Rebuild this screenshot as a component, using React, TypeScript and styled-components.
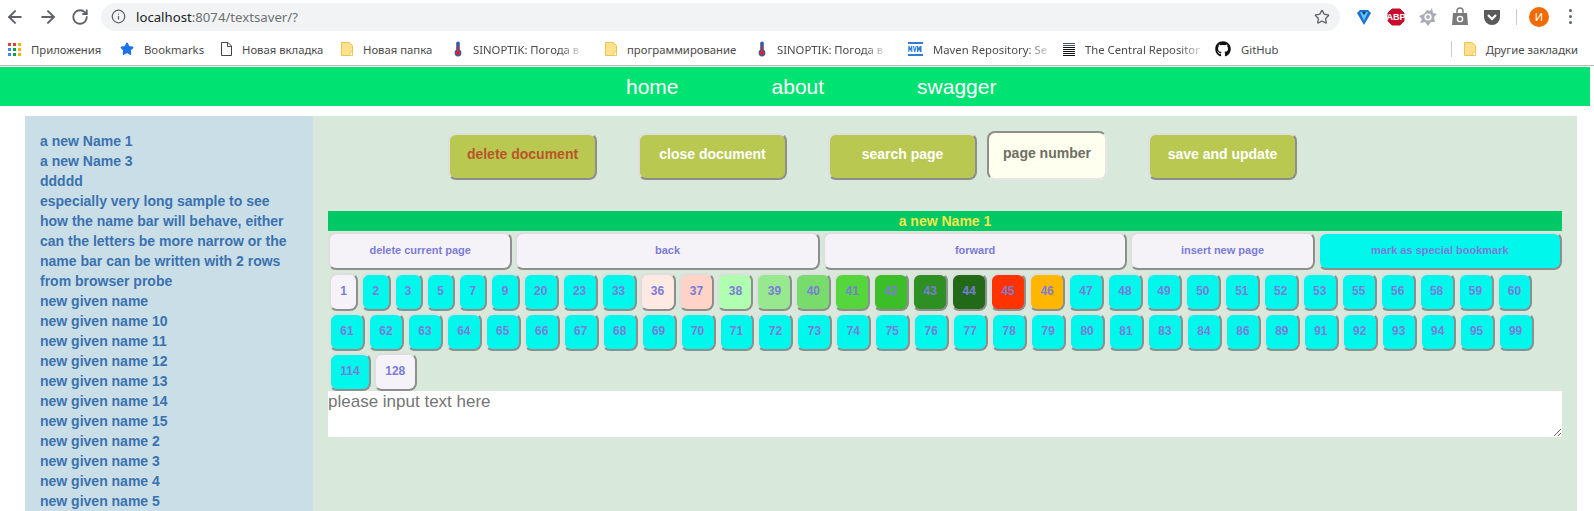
import React from 'react'
import styled, { createGlobalStyle } from 'styled-components'
import { ArrowLeft, ArrowRight, RotateCw, Info, Star } from 'lucide-react'
import { FaGithub } from 'react-icons/fa'

const GlobalStyle = createGlobalStyle`
  html, body {
    margin: 0;
    padding: 0;
    height: 511px;
    overflow: hidden;
    background: #fff;
    font-family: "Liberation Sans", Arial, sans-serif;
  }
`

const Chrome = styled.div`
  height: 66px;
  box-sizing: border-box;
  border-bottom: 1px solid #b9b9b9;
  background: #fff;
`

const ToolRow = styled.div`
  display: flex;
  align-items: center;
  height: 33px;
`

const NavIcons = styled.div`
  display: flex;
  align-items: center;
  width: 101px;
  flex: none;
  padding-left: 5px;
  box-sizing: border-box;
  gap: 13px;
  color: #5f6368;
`

const AddressBar = styled.div`
  display: flex;
  align-items: center;
  flex: none;
  width: 1239px;
  height: 28px;
  border-radius: 14px;
  background: #f1f3f4;
  box-sizing: border-box;
  padding: 0 10px;
  color: #5f6368;
  font: 13.2px "Noto Sans", sans-serif;
`

const Host = styled.span`
  color: #202124;
  margin-left: 10px;
`

const Path = styled.span`
  flex: 1;
  color: #6d7175;
`

const Extensions = styled.div`
  display: flex;
  align-items: center;
  flex: 1;
  padding-left: 14px;
  gap: 12px;
`

const Divider = styled.span`
  width: 1px;
  height: 16px;
  background: #ccc;
  margin-left: 2px;
`

const Avatar = styled.span`
  display: flex;
  align-items: center;
  justify-content: center;
  width: 20px;
  height: 20px;
  border-radius: 50%;
  background: #f06c00;
  color: #fff;
  font: 11px "Noto Sans", sans-serif;
`

const Dots = styled.span`
  display: flex;
  flex-direction: column;
  gap: 3px;
  margin-left: 8px;

  > i {
    width: 3px;
    height: 3px;
    border-radius: 50%;
    background: #5f6368;
  }
`

const BookmarksRow = styled.div`
  display: flex;
  align-items: center;
  height: 32px;
  padding-left: 8px;
  font: 11.3px "Noto Sans", sans-serif;
  color: #4a4a4a;
`

const Bookmark = styled.div<{ $w: number; $fade?: boolean }>`
  display: flex;
  align-items: center;
  flex: none;
  gap: 10px;
  width: ${({ $w }) => $w}px;
  white-space: nowrap;

  > span {
    ${({ $fade }) => $fade && `
      -webkit-mask-image: linear-gradient(to right, #000 82%, rgba(0, 0, 0, .25) 100%);
      mask-image: linear-gradient(to right, #000 82%, rgba(0, 0, 0, .25) 100%);
    `}
  }
`

const OtherBookmarks = styled.div`
  display: flex;
  align-items: center;
  gap: 10px;
  margin-left: auto;
  margin-right: 16px;
  padding-left: 12px;
  border-left: 1px solid #ccc;
  height: 16px;
`

const Header = styled.nav`
  display: flex;
  align-items: center;
  gap: 93px;
  width: 1590px;
  height: 39px;
  margin-top: 1px;
  padding-left: 626px;
  box-sizing: border-box;
  background: #00e272;
`

const HeaderLink = styled.a`
  color: #fff;
  font-size: 21px;
`

const Body = styled.div`
  display: flex;
  width: 1552px;
  height: 395px;
  margin: 10px 0 0 25px;
  overflow: hidden;
`

const Sidebar = styled.ul`
  flex: none;
  width: 288px;
  box-sizing: border-box;
  margin: 0;
  padding: 15px 23px 0 15px;
  list-style: none;
  background: #cadee8;
`

const SidebarItem = styled.li`
  color: #3a72b0;
  font-size: 14px;
  font-weight: bold;
  line-height: 20px;
`

const Main = styled.main`
  flex: 1;
  min-width: 0;
  padding: 15px 15px 0;
  background: #d8e8da;
`

const TopActions = styled.div`
  display: flex;
  align-items: flex-end;
  height: 49px;
  margin: 0 0 31px 120px;
`

const TopButton = styled.button<{ $danger?: boolean; $gap?: number }>`
  width: 149px;
  height: 47px;
  margin-right: ${({ $gap }) => $gap ?? 41}px;
  padding: 0 0 5px;
  border: 2px solid;
  border-color: #dedede #8e8e8e #8e8e8e #dedede;
  border-radius: 8px;
  background: #b8c850;
  color: ${({ $danger }) => ($danger ? '#b8562a' : '#fff')};
  font: bold 14px "Liberation Sans", Arial, sans-serif;
`

const PageInput = styled.input`
  width: 120px;
  height: 49px;
  margin-right: 41px;
  box-sizing: border-box;
  padding: 0 0 5px;
  border: 2px solid;
  border-color: #8e8e8e #e6e6e6 #e6e6e6 #8e8e8e;
  border-radius: 8px;
  outline: none;
  background: #fffff0;
  text-align: center;
  font: bold 14px "Liberation Sans", Arial, sans-serif;

  &::placeholder {
    color: #6e6e62;
    opacity: 1;
  }
`

const TitleBar = styled.div`
  height: 20px;
  background: #00c864;
  color: #f2e64a;
  font-size: 14px;
  font-weight: bold;
  line-height: 20px;
  text-align: center;
`

const PageActions = styled.div`
  display: flex;
  gap: 3px;
  margin: 1px 0 3px;
`

const PageAction = styled.button<{ $grow: number; $bg?: string }>`
  flex: ${({ $grow }) => $grow} 1 0;
  min-width: 0;
  height: 38px;
  padding: 0 0 2px;
  border: 2px solid;
  border-color: #dedede #8e8e8e #8e8e8e #dedede;
  border-radius: 8px;
  background: ${({ $bg }) => $bg ?? '#f5f3f7'};
  color: #7b7bd8;
  font: bold 11px "Liberation Sans", Arial, sans-serif;
`

const PageList = styled.div`
  display: flex;
  flex-wrap: wrap;
  gap: 2px 3px;
  padding-left: 1px;
`

const PageButton = styled.button<{ $bg: string }>`
  height: 38px;
  padding: 0 9.3px 2px;
  border: 2px solid;
  border-color: #dedede #8e8e8e #8e8e8e #dedede;
  border-radius: 8px;
  background: ${({ $bg }) => $bg};
  color: #7b7bd8;
  font: bold 12px "Liberation Sans", Arial, sans-serif;
`

const TextInput = styled.textarea`
  display: block;
  width: 100%;
  height: 46px;
  box-sizing: border-box;
  margin: 0;
  padding: 1px 0 0;
  border: none;
  outline: none;
  background: #fff;
  font: 17px "Liberation Sans", Arial, sans-serif;

  &::placeholder {
    color: #757575;
  }
`

const AppsIcon = () => {
  const colors = ['#db4437', '#db4437', '#f4b400', '#4285f4', '#0f9d58', '#f4b400', '#4285f4', '#0f9d58', '#f4b400']
  return (
    <svg width="13" height="13" viewBox="0 0 13 13">
      {colors.map((c, i) => (
        <rect key={i} x={(i % 3) * 5} y={Math.floor(i / 3) * 5} width="3" height="3" fill={c} />
      ))}
    </svg>
  )
}

const PageIcon = () => (
  <svg width="11" height="14" viewBox="0 0 11 14">
    <path d="M.5.5h6.5l3.5 3.5v9.500h-10z" fill="#fff" stroke="#444" />
    <path d="M6.500.5v4h4" fill="none" stroke="#444" />
  </svg>
)

const FolderIcon = () => (
  <svg width="12" height="14" viewBox="0 0 12 14">
    <path d="M.5.5h7.500l3.500 3v10h-11z" fill="#fee08f" stroke="#eec44c" />
    <rect x="9" y="10" width="2.500" height="3.500" fill="#fff" stroke="#eec44c" strokeWidth=".8" />
  </svg>
)

const ThermoIcon = () => (
  <svg width="10" height="16" viewBox="-1 0 10 16">
    <rect x="2.200" y=".5" width="3.600" height="11" rx="1.800" fill="#2f5fa8" />
    <circle cx="4" cy="12" r="3.400" fill="#2f5fa8" />
    <rect x="3.200" y="5" width="1.600" height="7" fill="#d8262c" />
    <circle cx="4" cy="12" r="2.200" fill="#d8262c" />
  </svg>
)

const MvnIcon = () => (
  <svg width="15" height="14" viewBox="0 0 15 14">
    <rect width="15" height="2" fill="#2d7dd2" />
    <rect y="12" width="15" height="2" fill="#2d7dd2" />
    <path d="M.8 10V4l1.500 4 1.500-4v6M5.500 4l1.300 6 1.300-6M9.500 10V4l1.400 4 1.400-4v6M13 4v6" fill="none" stroke="#2d7dd2" strokeWidth="1.100" />
  </svg>
)

const LinesIcon = () => (
  <svg width="12" height="13" viewBox="0 0 12 13">
    {[0, 2, 4, 6, 8, 10, 12].map(y => (
      <rect key={y} y={y} width="12" height="1" fill={y < 4 ? '#44546a' : '#111'} />
    ))}
  </svg>
)

const VIcon = () => (
  <svg width="20" height="20" viewBox="0 0 20 20">
    <path d="M3 6l3-3h8l3 3-7 12z" fill="#1f6fd0" />
    <path d="M6 5h8l-4 9z" fill="#5cc6ff" />
    <path d="M10 8l-2-3h4z" fill="#0b2f66" />
  </svg>
)

const AbpIcon = () => (
  <svg width="20" height="20" viewBox="0 0 20 20">
    <path d="M6 2h8l4 4v8l-4 4H6l-4-4V6z" fill="#c70d2c" stroke="#c70d2c" />
    <text x="10" y="13.300" textAnchor="middle" fill="#fff" fontSize="9" fontWeight="bold" fontFamily="Liberation Sans">ABP</text>
  </svg>
)

const AvastIcon = () => (
  <svg width="20" height="20" viewBox="0 0 20 20">
    <path d="M14 1l1 5 4 1-3 3 1 5-4 0-3 4-3-4-5 1 2-4-3-3 5-2 3-4 3 1z" fill="#a9adb3" />
    <circle cx="10" cy="10" r="2.800" fill="none" stroke="#fff" strokeWidth="1.600" />
  </svg>
)

const BagIcon = () => (
  <svg width="20" height="20" viewBox="0 0 20 20">
    <path d="M3 6h14l1 12H2z" fill="#7a7a7a" />
    <path d="M7 6V4a3 3 0 016 0v2" fill="none" stroke="#7a7a7a" strokeWidth="1.400" />
    <circle cx="10" cy="12" r="2.600" fill="none" stroke="#fff" strokeWidth="1.400" />
  </svg>
)

const PocketIcon = () => (
  <svg width="20" height="20" viewBox="0 0 20 20">
    <path d="M2 3h16v7a8 8 0 01-16 0z" fill="#5a5a5a" />
    <path d="M6 8l4 4 4-4" fill="none" stroke="#fff" strokeWidth="2.200" />
  </svg>
)

const names = [
  'a new Name 1',
  'a new Name 3',
  'ddddd',
  'especially very long sample to see how the name bar will behave, either can the letters be more narrow or the name bar can be written with 2 rows',
  'from browser probe',
  'new given name',
  'new given name 10',
  'new given name 11',
  'new given name 12',
  'new given name 13',
  'new given name 14',
  'new given name 15',
  'new given name 2',
  'new given name 3',
  'new given name 4',
  'new given name 5',
]

const pages = [
  1, 2, 3, 5, 7, 9, 20, 23, 33, 36, 37, 38, 39, 40, 41, 42, 43, 44, 45, 46, 47, 48, 49, 50, 51, 52, 53, 55, 56, 58, 59, 60,
  61, 62, 63, 64, 65, 66, 67, 68, 69, 70, 71, 72, 73, 74, 75, 76, 77, 78, 79, 80, 81, 83, 84, 86, 89, 91, 92, 93, 94, 95, 99,
  114, 128,
]

const pageColors: Record<number, string> = {
  1: '#f5f3f7',
  36: '#ffe9e3',
  37: '#ffd3c8',
  38: '#b0ffb0',
  39: '#98e890',
  40: '#78dc6c',
  41: '#55d63c',
  42: '#3cbe28',
  43: '#2e8f22',
  44: '#226a18',
  45: '#ff3300',
  46: '#ffb600',
  128: '#f5f3f7',
}

const App = () => {
  return (
    <>
      <GlobalStyle />
      <Chrome>
        <ToolRow>
          <NavIcons>
            <ArrowLeft size={20} strokeWidth={2.4} />
            <ArrowRight size={20} strokeWidth={2.4} />
            <RotateCw size={18} strokeWidth={2.4} />
          </NavIcons>
          <AddressBar>
            <Info size={15} />
            <Host>localhost</Host>
            <Path>:8074/textsaver/?</Path>
            <Star size={16} />
          </AddressBar>
          <Extensions>
            <VIcon />
            <AbpIcon />
            <AvastIcon />
            <BagIcon />
            <PocketIcon />
            <Divider />
            <Avatar>И</Avatar>
            <Dots><i /><i /><i /></Dots>
          </Extensions>
        </ToolRow>
        <BookmarksRow>
          <Bookmark $w={112}><AppsIcon /><span>Приложения</span></Bookmark>
          <Bookmark $w={101}><Star size={14} fill="#1a73e8" color="#1a73e8" /><span>Bookmarks</span></Bookmark>
          <Bookmark $w={120}><PageIcon /><span>Новая вкладка</span></Bookmark>
          <Bookmark $w={112}><FolderIcon /><span>Новая папка</span></Bookmark>
          <Bookmark $w={152} $fade><ThermoIcon /><span>SINOPTIK: Погода в</span></Bookmark>
          <Bookmark $w={152}><FolderIcon /><span>программирование</span></Bookmark>
          <Bookmark $w={151} $fade><ThermoIcon /><span>SINOPTIK: Погода в</span></Bookmark>
          <Bookmark $w={155} $fade><MvnIcon /><span>Maven Repository: Se</span></Bookmark>
          <Bookmark $w={152} $fade><LinesIcon /><span>The Central Repositor</span></Bookmark>
          <Bookmark $w={80}><FaGithub size={16} color="#111" /><span>GitHub</span></Bookmark>
          <OtherBookmarks><FolderIcon /><span>Другие закладки</span></OtherBookmarks>
        </BookmarksRow>
      </Chrome>
      <Header>
        <HeaderLink>home</HeaderLink>
        <HeaderLink>about</HeaderLink>
        <HeaderLink>swagger</HeaderLink>
      </Header>
      <Body>
        <Sidebar>
          {names.map(name => (
            <SidebarItem key={name}>{name}</SidebarItem>
          ))}
        </Sidebar>
        <Main>
          <TopActions>
            <TopButton $danger>delete document</TopButton>
            <TopButton>close document</TopButton>
            <TopButton $gap={10}>search page</TopButton>
            <PageInput placeholder="page number" />
            <TopButton>save and update</TopButton>
          </TopActions>
          <TitleBar>a new Name 1</TitleBar>
          <PageActions>
            <PageAction $grow={3}>delete current page</PageAction>
            <PageAction $grow={5}>back</PageAction>
            <PageAction $grow={5}>forward</PageAction>
            <PageAction $grow={3}>insert new page</PageAction>
            <PageAction $grow={4} $bg="#00f8ec">mark as special bookmark</PageAction>
          </PageActions>
          <PageList>
            {pages.map(page => (
              <PageButton key={page} $bg={pageColors[page] ?? '#00f8ec'}>{page}</PageButton>
            ))}
          </PageList>
          <TextInput placeholder="please input text here" />
        </Main>
      </Body>
    </>
  )
}

export default App
